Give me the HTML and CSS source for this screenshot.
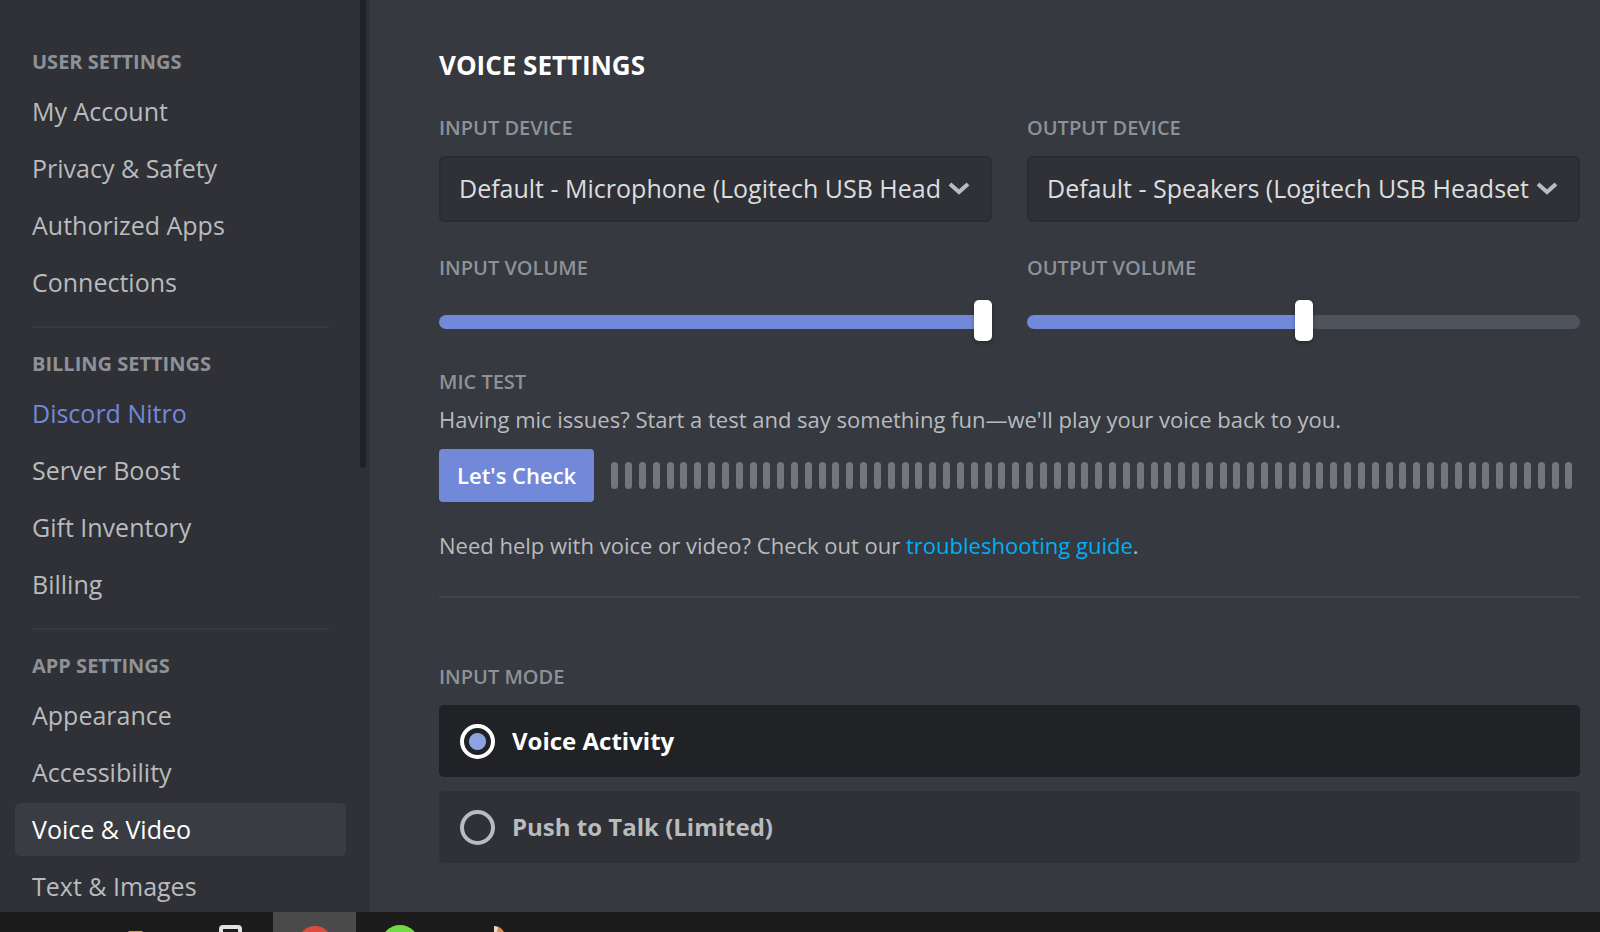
FILE: index.html
```html
<!DOCTYPE html>
<html lang="en">

<head>
    <meta charset="UTF-8">
    <meta name="viewport" content="width=device-width, initial-scale=1.0">
    <title>Voice &amp; Video</title>
    <link rel="stylesheet" href="styles.css">
    <script>
        window.onload = function() {
            // fill the mic meter
            var meter = document.getElementById("meter");
            for (var i = 0; i < 70; i++) {
                meter.appendChild(document.createElement("span"));
            }
        };
    </script>
</head>

<body>
    <div class="app">
        <!-- sidebar -->
        <nav class="sidebar">
            <section class="group">
                <h2>USER SETTINGS</h2>
                <a href="#">My Account</a>
                <a href="#">Privacy &amp; Safety</a>
                <a href="#">Authorized Apps</a>
                <a href="#">Connections</a>
            </section>
            <section class="group">
                <h2>BILLING SETTINGS</h2>
                <a href="#" class="nitro">Discord Nitro</a>
                <a href="#">Server Boost</a>
                <a href="#">Gift Inventory</a>
                <a href="#">Billing</a>
            </section>
            <section class="group">
                <h2>APP SETTINGS</h2>
                <a href="#">Appearance</a>
                <a href="#">Accessibility</a>
                <a href="#" class="active">Voice &amp; Video</a>
                <a href="#">Text &amp; Images</a>
            </section>
            <div class="scrollbar"></div>
        </nav>

        <!-- content -->
        <main class="content">
            <h1>VOICE SETTINGS</h1>
            <div class="devices">
                <div class="device">
                    <label class="label" for="inputDevice">INPUT DEVICE</label>
                    <div class="select">
                        <select id="inputDevice">
                            <option>Default - Microphone (Logitech USB Head</option>
                        </select>
                        <svg width="22" height="14" viewBox="0 0 22 14"><path d="M2 3 L11 11 L20 3" /></svg>
                    </div>
                    <label class="label" for="inputVolume">INPUT VOLUME</label>
                    <input type="range" class="slider full" id="inputVolume" min="0" max="100" value="100">
                </div>
                <div class="device">
                    <label class="label" for="outputDevice">OUTPUT DEVICE</label>
                    <div class="select">
                        <select id="outputDevice">
                            <option>Default - Speakers (Logitech USB Headset</option>
                        </select>
                        <svg width="22" height="14" viewBox="0 0 22 14"><path d="M2 3 L11 11 L20 3" /></svg>
                    </div>
                    <label class="label" for="outputVolume">OUTPUT VOLUME</label>
                    <input type="range" class="slider half" id="outputVolume" min="0" max="200" value="100">
                </div>
            </div>

            <section class="mic-test">
                <h3 class="label">MIC TEST</h3>
                <p>Having mic issues? Start a test and say something fun—we'll play your voice back to you.</p>
                <div class="mic-row">
                    <button type="button">Let's Check</button>
                    <div class="meter" id="meter"></div>
                </div>
                <p class="help">Need help with voice or video? Check out our <a href="#">troubleshooting guide</a>.</p>
            </section>

            <section class="modes">
                <h3 class="label">INPUT MODE</h3>
                <label class="mode checked" for="voiceActivity">
                    <input type="radio" name="mode" id="voiceActivity" checked>
                    <span>Voice Activity</span>
                </label>
                <label class="mode" for="pushToTalk">
                    <input type="radio" name="mode" id="pushToTalk">
                    <span>Push to Talk (Limited)</span>
                </label>
            </section>
        </main>
    </div>

    <!-- taskbar -->
    <footer class="taskbar">
        <button type="button" aria-label="Files">
            <svg width="83" height="20" viewBox="0 0 83 20"><path d="M25 22 V20 Q25 19 27 19 H39 L42 22 Z" fill="#d9a12c" /></svg>
        </button>
        <button type="button" aria-label="Phone">
            <svg width="83" height="20" viewBox="0 0 83 20"><path d="M33 24 V17 Q33 15 35 15 H50 Q52 15 52 17 V24" fill="none" stroke="#e2e2e2" stroke-width="4" /></svg>
        </button>
        <button type="button" aria-label="Browser" class="open">
            <svg width="83" height="20" viewBox="0 0 83 20"><circle cx="42" cy="31" r="17" fill="#dd4b3e" /></svg>
        </button>
        <button type="button" aria-label="Music">
            <svg width="83" height="20" viewBox="0 0 83 20"><circle cx="42" cy="32" r="19" fill="#6fdb45" /></svg>
        </button>
        <button type="button" aria-label="Paint">
            <svg width="83" height="20" viewBox="0 0 83 20"><path d="M51 14 Q58 14 61 20 H51 Z" fill="#c98f5e" /><path d="M51 14 L55 15 L54 20 H51 Z" fill="#ecd9c4" /></svg>
        </button>
    </footer>
</body>

</html>
```
FILE: styles.css
```css
* {
    margin: 0;
    padding: 0;
    box-sizing: border-box;
}

body {
    display: flex;
    flex-direction: column;
    height: 100vh;
    overflow: hidden;
    background-color: #36393f;
    color: #b9bbbe;
    font-family: "Open Sans", "Noto Sans", sans-serif;
}

button,
select {
    border: none;
    font-family: inherit;
}

.app {
    flex: 1;
    display: flex;
    min-height: 0;
}

/* sidebar */

.sidebar {
    position: relative;
    flex: none;
    width: 370px;
    padding: 52px 24px 0 15px;
    overflow: hidden;
    background-color: #2f3136;
}

.group {
    display: flex;
    flex-direction: column;
    gap: 4px;
}

.group + .group::before {
    content: "";
    height: 2px;
    margin: 17px 17px 22px;
    background-color: #36393f;
}

.group h2 {
    padding: 0 17px;
    margin-bottom: 9px;
    color: #8e9297;
    font-size: 20px;
    line-height: 20px;
}

.group a {
    padding: 0 17px;
    border-radius: 5px;
    color: #b9bbbe;
    font-size: 25px;
    line-height: 53px;
    text-decoration: none;
}

.group a.nitro {
    color: #7289da;
}

.group a.active {
    background-color: #393c43;
    color: #fff;
}

.scrollbar {
    position: absolute;
    top: 0;
    right: 4px;
    width: 6px;
    height: 468px;
    border-radius: 0 0 3px 3px;
    background-color: #202225;
}

/* content */

.content {
    flex: 1;
    min-width: 0;
    padding: 49px 20px 0 69px;
    overflow: hidden;
}

.content h1 {
    color: #fff;
    font-size: 26px;
    line-height: 32px;
}

.label {
    display: block;
    color: #8e9297;
    font-size: 20px;
    font-weight: 600;
    line-height: 20px;
}

.devices {
    display: grid;
    grid-template-columns: 1fr 1fr;
    gap: 35px;
    margin-top: 37px;
}

.select {
    position: relative;
    margin: 18px 0 36px;
}

.select select {
    display: block;
    width: 100%;
    height: 66px;
    padding: 0 46px 2px 18px;
    border: 2px solid #2a2c31;
    border-radius: 6px;
    background-color: #2f3136;
    color: #dcddde;
    font-size: 25px;
    appearance: none;
}

.select svg {
    position: absolute;
    top: 25px;
    right: 22px;
    fill: none;
    stroke: #b9bbbe;
    stroke-width: 4;
    pointer-events: none;
}

.slider {
    display: block;
    width: 100%;
    height: 41px;
    margin-top: 23px;
    background: none;
    appearance: none;
}

.slider::-webkit-slider-runnable-track {
    height: 14px;
    border-radius: 7px;
    background-color: #4f545c;
}

.slider.full::-webkit-slider-runnable-track {
    background-color: #7289da;
}

.slider.half::-webkit-slider-runnable-track {
    background-image: linear-gradient(to right, #7289da 50%, transparent 50%);
}

/* the thumb sits a little above the middle of the track */

.slider::-webkit-slider-thumb {
    width: 18px;
    height: 41px;
    margin-top: -15px;
    border-radius: 5px;
    background-color: #fff;
    box-shadow: 0 2px 4px rgba(0, 0, 0, 0.3);
    appearance: none;
}

.mic-test {
    margin-top: 30px;
    padding-bottom: 36px;
    border-bottom: 2px solid #42454b;
}

.mic-test p {
    margin-top: 12px;
    font-size: 22px;
    line-height: 30px;
}

.mic-test p.help {
    margin-top: 28px;
}

.mic-test a {
    color: #00aff4;
    text-decoration: none;
}

.mic-row {
    display: flex;
    align-items: center;
    gap: 17px;
    margin-top: 15px;
}

.mic-row button {
    height: 53px;
    padding: 0 18px 2px;
    border-radius: 4px;
    background-color: #7289da;
    color: #fff;
    font-size: 22px;
    font-weight: 600;
}

.meter {
    flex: 1;
    display: flex;
    justify-content: space-between;
    padding-right: 7px;
}

.meter span {
    width: 7px;
    height: 27px;
    border-radius: 4px;
    background-color: #72767d;
}

.modes {
    display: flex;
    flex-direction: column;
    gap: 14px;
    margin-top: 69px;
}

.modes h3 {
    margin-bottom: 4px;
}

.mode {
    display: flex;
    align-items: center;
    gap: 17px;
    height: 72px;
    padding: 0 21px;
    border-radius: 5px;
    background-color: #2f3136;
    color: #b9bbbe;
    font-size: 24px;
    font-weight: 700;
}

.mode.checked {
    background-color: #202225;
    color: #fff;
}

.mode span {
    padding-bottom: 2px;
}

.mode input {
    width: 35px;
    height: 35px;
    border: 4px solid #b9bbbe;
    border-radius: 50%;
    appearance: none;
}

.mode input:checked {
    border-color: #fff;
    background: radial-gradient(circle, #8ea1e1 8px, transparent 9px);
}

/* taskbar */

.taskbar {
    flex: none;
    display: flex;
    gap: 2px;
    height: 20px;
    padding-left: 103px;
    overflow: hidden;
    background-color: #1c1c1c;
}

.taskbar button {
    height: 20px;
    background: none;
}

.taskbar button.open {
    background-color: #4a4a4a;
}

.taskbar svg {
    display: block;
}
```
